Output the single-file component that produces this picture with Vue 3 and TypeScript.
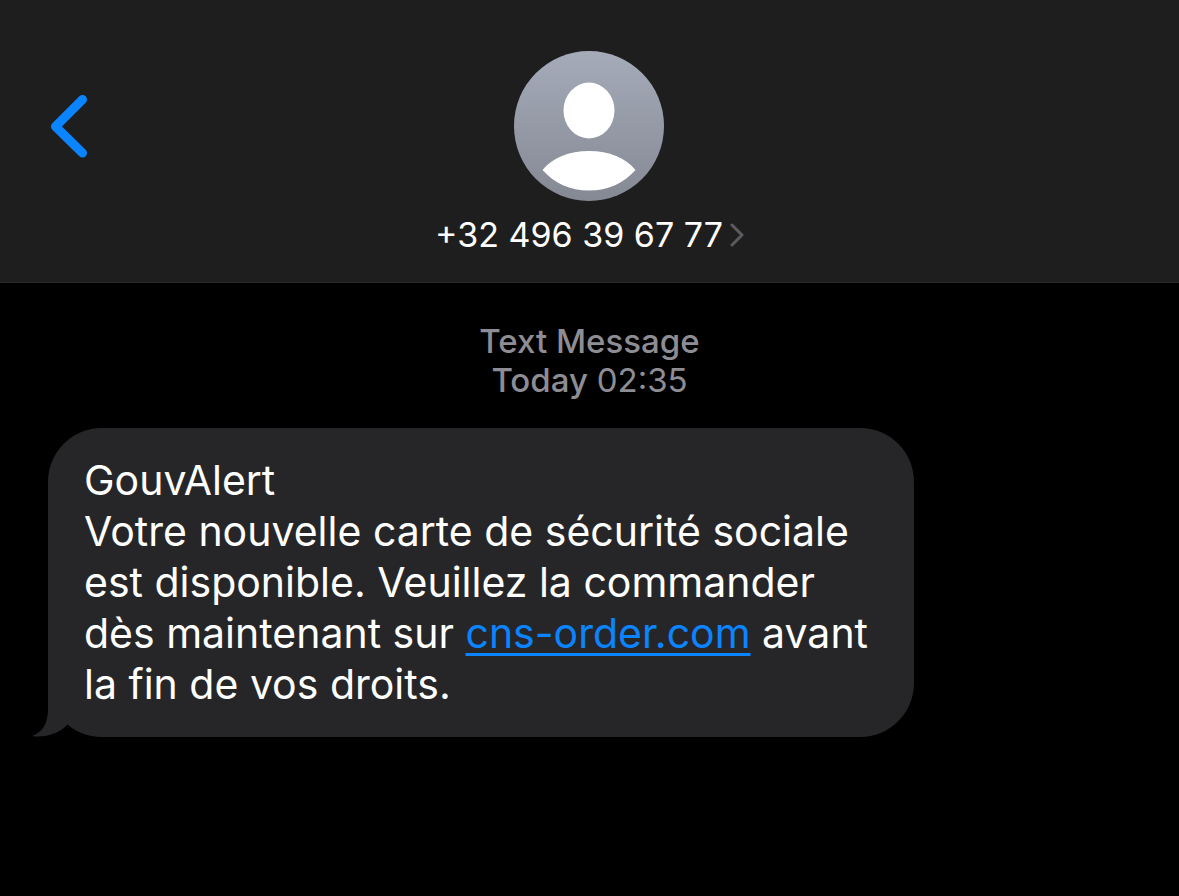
<script setup lang="ts">
interface LinePart {
  text: string
  href?: string
}

const phoneNumber = '+32 496 39 67 77'
const lines: LinePart[][] = [
  [{ text: 'GouvAlert' }],
  [{ text: 'Votre nouvelle carte de sécurité sociale' }],
  [{ text: 'est disponible. Veuillez la commander' }],
  [{ text: 'dès maintenant sur ' }, { text: 'cns-order.com', href: '#' }, { text: ' avant' }],
  [{ text: 'la fin de vos droits.' }],
]
</script>

<template>
  <div class="screen">
    <header class="header">
      <button class="back" type="button" aria-label="Back">
        <svg width="38" height="64" viewBox="0 0 38 64" aria-hidden="true">
          <path d="M32.500 5.500 L5.500 32.500 L32.500 59" fill="none" stroke="#0a84ff" stroke-width="9" stroke-linecap="round" stroke-linejoin="round" />
        </svg>
      </button>
      <button class="contact" type="button">
        <svg class="avatar" width="150" height="150" viewBox="0 0 150 150" aria-hidden="true">
          <defs>
            <linearGradient id="avatar-fill" x1="0" y1="0" x2="0" y2="1">
              <stop offset="0" stop-color="#a5abb9" />
              <stop offset="1" stop-color="#858994" />
            </linearGradient>
          </defs>
          <circle cx="75" cy="75" r="75" fill="url(#avatar-fill)" />
          <ellipse cx="75" cy="59.500" rx="25.500" ry="28" fill="#fff" />
          <path d="M28.500 119 C38 107 55 100 75 100 C95 100 112 107 121.500 119 C110 132 94 139.500 75 139.500 C56 139.500 40 132 28.500 119 Z" fill="#fff" />
        </svg>
        <span class="number">
          {{ phoneNumber }}
          <svg width="14" height="24" viewBox="0 0 14 24" aria-hidden="true">
            <path d="M2 2 L12 12 L2 22" fill="none" stroke="#5b5b5f" stroke-width="3" stroke-linecap="round" stroke-linejoin="round" />
          </svg>
        </span>
      </button>
    </header>
    <main class="thread">
      <div class="stamp">
        <div>Text Message</div>
        <div>Today <time>02:35</time></div>
      </div>
      <div class="bubble">
        <p v-for="(line, i) in lines" :key="i"><template v-for="(part, j) in line" :key="j"><a v-if="part.href" :href="part.href">{{ part.text }}</a><template v-else>{{ part.text }}</template></template></p>
        <svg class="tail" width="48" height="60" viewBox="0 0 48 60" aria-hidden="true">
          <path d="M16 0 V32 C16 46 11 55 0 59 C13 61 26 57 35 48 L48 36 V0 Z" fill="#262628" />
        </svg>
      </div>
    </main>
  </div>
</template>

<style>
body {
  margin: 0;
  background: #000;
}
</style>

<style scoped>
.screen {
  min-height: 100vh;
  background: #000;
  color: #fff;
  font-family: Inter, "Liberation Sans", sans-serif;
}
button {
  border: 0;
  padding: 0;
  background: none;
  color: inherit;
  font: inherit;
  cursor: pointer;
}
svg {
  display: block;
  flex: none;
}
.header {
  display: grid;
  grid-template-columns: 1fr auto 1fr;
  align-items: start;
  padding: 51px 50px 28px;
  background: #1e1e1e;
  border-bottom: 1px solid #2a2a2c;
}
.back {
  justify-self: start;
  margin-top: 43px;
}
.contact {
  display: flex;
  flex-direction: column;
  align-items: center;
  gap: 15px;
}
.number {
  display: flex;
  align-items: center;
  gap: 7px;
  font-size: 34px;
  line-height: 38px;
  white-space: nowrap;
}
.thread {
  padding: 39px 48px;
}
.stamp {
  text-align: center;
  font-size: 33px;
  line-height: 39px;
  font-weight: 500;
  color: #8d8d93;
}
.stamp time {
  font-weight: 400;
}
.bubble {
  position: relative;
  box-sizing: border-box;
  width: fit-content;
  margin-top: 28px;
  padding: 27px 46px 27px 36px;
  border-radius: 54px;
  background: #262628;
  font-size: 41px;
  line-height: 51px;
}
.bubble p {
  margin: 0;
}
.bubble a {
  color: #0a84ff;
  text-decoration: underline;
  text-decoration-thickness: 3px;
  text-underline-offset: 5px;
}
.tail {
  position: absolute;
  left: -16px;
  bottom: 0;
}
</style>
